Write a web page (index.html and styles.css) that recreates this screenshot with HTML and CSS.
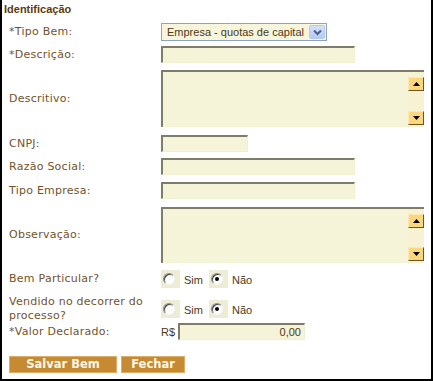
FILE: index.html
```html
<!DOCTYPE html>
<html>
<head lang="pt">
    <meta charset="UTF-8">
    <title>Identificação</title>
    <link rel="stylesheet" href="styles.css">
</head>
<body>
<div class="painel">
    <div class="titulo">Identificação</div>
    <div class="form">
        <div class="linha l-tipo">
            <label>*Tipo Bem:</label>
            <div class="select">
                <span class="select-texto">Empresa - quotas de capital</span>
                <span class="select-seta">
                    <svg width="9" height="7" viewBox="0 0 9 7"><path d="M1 1.5 L4.5 5 L8 1.5" fill="none" stroke="#4d6185" stroke-width="2"/></svg>
                </span>
            </div>
        </div>
        <div class="linha l-desc">
            <label>*Descrição:</label>
            <div class="input input-medio"></div>
        </div>
        <div class="linha l-area">
            <label>Descritivo:</label>
            <div class="area">
                <div class="area-texto"></div>
                <div class="rolagem">
                    <span class="rolagem-btn"><svg width="7" height="4" viewBox="0 0 7 4"><path d="M0 4 L3.5 0 L7 4 Z" fill="#000"/></svg></span>
                    <span class="rolagem-btn"><svg width="7" height="4" viewBox="0 0 7 4"><path d="M0 0 L3.5 4 L7 0 Z" fill="#000"/></svg></span>
                </div>
            </div>
        </div>
        <div class="linha l-cnpj">
            <label>CNPJ:</label>
            <div class="input input-curto"></div>
        </div>
        <div class="linha l-razao">
            <label>Razão Social:</label>
            <div class="input input-medio"></div>
        </div>
        <div class="linha l-razao">
            <label>Tipo Empresa:</label>
            <div class="input input-medio"></div>
        </div>
        <div class="linha l-obs">
            <label>Observação:</label>
            <div class="area area-obs">
                <div class="area-texto"></div>
                <div class="rolagem">
                    <span class="rolagem-btn"><svg width="7" height="4" viewBox="0 0 7 4"><path d="M0 4 L3.5 0 L7 4 Z" fill="#000"/></svg></span>
                    <span class="rolagem-btn"><svg width="7" height="4" viewBox="0 0 7 4"><path d="M0 0 L3.5 4 L7 0 Z" fill="#000"/></svg></span>
                </div>
            </div>
        </div>
        <div class="linha l-bem">
            <label>Bem Particular?</label>
            <div class="opcoes">
                <span class="radio-caixa"><span class="radio"></span></span>
                <span class="opcao">Sim</span>
                <span class="radio-caixa"><span class="radio marcado"></span></span>
                <span class="opcao">Não</span>
            </div>
        </div>
        <div class="linha l-vendido">
            <label>Vendido no decorrer do processo?</label>
            <div class="opcoes">
                <span class="radio-caixa"><span class="radio"></span></span>
                <span class="opcao">Sim</span>
                <span class="radio-caixa"><span class="radio marcado"></span></span>
                <span class="opcao">Não</span>
            </div>
        </div>
        <div class="linha l-valor">
            <label>*Valor Declarado:</label>
            <span class="moeda">R$</span>
            <div class="input input-valor">0,00</div>
        </div>
        <div class="botoes">
            <a href="javascript:void(0);" class="botao botao-salvar">Salvar Bem</a>
            <a href="javascript:void(0);" class="botao botao-fechar">Fechar</a>
        </div>
    </div>
</div>
</body>
</html>
```

FILE: styles.css
```css
body {
    margin: 0px;
    background: #ffffff;
}
.painel {
    width: 433px;
    height: 381px;
    box-sizing: border-box;
    border-left: #000000 solid 2px;
    border-right: #000000 solid 2px;
    border-bottom: #000000 solid 2px;
}
.titulo {
    height: 23px;
    box-sizing: border-box;
    padding: 3px 0px 0px 2px;
    font-family: "Liberation Sans", Arial, sans-serif;
    font-weight: bold;
    font-size: 11px;
    line-height: 13px;
    color: #5e3b0b;
}
.form {
    padding-left: 7px;
}
.linha {
    display: flex;
    align-items: center;
}
.linha label {
    width: 152px;
    flex: none;
    font-family: "DejaVu Sans", Verdana, sans-serif;
    font-size: 11px;
    line-height: 14px;
    letter-spacing: 0.25px;
    color: #73532b;
}
.l-desc { margin-top: 5px; }
.l-area { margin-top: 7px; }
.l-cnpj { margin-top: 8px; }
.l-razao { margin-top: 6px; }
.l-razao + .l-razao { margin-top: 7px; }
.l-obs { margin-top: 8px; }
.l-bem { margin-top: 7px; }
.l-vendido { margin-top: 7px; }
.l-valor { margin-top: 0px; }

/* caixa de selecao */
.select {
    width: 166px;
    height: 18px;
    box-sizing: border-box;
    border: #8ea3bf solid 1px;
    background: #f7f5dc;
    display: flex;
    align-items: center;
    justify-content: space-between;
    padding: 0px 1px 0px 5px;
}
.select-texto {
    font-family: "Liberation Sans", Arial, sans-serif;
    font-size: 11px;
    color: #4e3814;
}
.select-seta {
    width: 16px;
    height: 14px;
    box-sizing: border-box;
    border: #b7c9ee solid 1px;
    border-radius: 2px;
    background: linear-gradient(#d4e1fc, #b6caf4);
    display: flex;
    align-items: center;
    justify-content: center;
}

/* campos de texto */
.input {
    height: 17px;
    box-sizing: border-box;
    background: #f5f4d8;
    border-top: #7e7c6b solid 2px;
    border-left: #7e7c6b solid 2px;
    border-right: #f0efd2 solid 1px;
    border-bottom: #f0efd2 solid 1px;
}
.input-medio { width: 194px; }
.input-curto { width: 87px; }
.input-valor {
    width: 127px;
    margin-left: 2px;
    padding-right: 3px;
    text-align: right;
    font-family: "Liberation Sans", Arial, sans-serif;
    font-size: 11px;
    line-height: 14px;
    color: #4e3814;
}
.moeda {
    width: 15px;
    font-family: "Liberation Sans", Arial, sans-serif;
    font-size: 11px;
    color: #4e3814;
}

/* area de texto com barra de rolagem */
.area {
    width: 263px;
    height: 57px;
    box-sizing: border-box;
    display: flex;
    background: #f5f4d8;
    border-top: #7e7c6b solid 2px;
    border-left: #7e7c6b solid 2px;
}
.area-obs { height: 56px; }
.area-texto {
    flex: 1;
}
.rolagem {
    width: 16px;
    display: flex;
    flex-direction: column;
    justify-content: space-between;
    padding: 5px 0px 2px 0px;
    background: #f6f2d3;
}
.rolagem-btn {
    height: 14px;
    box-sizing: border-box;
    background: #fad77c;
    border-top: #fde9b0 solid 1px;
    border-left: #fde9b0 solid 1px;
    border-right: #6d5520 solid 1px;
    border-bottom: #6d5520 solid 1px;
    display: flex;
    align-items: center;
    justify-content: center;
}

/* opcoes sim/nao */
.opcoes {
    display: flex;
    align-items: center;
}
.radio-caixa {
    width: 19px;
    height: 18px;
    background: #edecd5;
    display: flex;
    align-items: center;
    padding-left: 2px;
    box-sizing: border-box;
}
.radio {
    width: 12px;
    height: 12px;
    box-sizing: border-box;
    border-radius: 50%;
    border: solid 1px;
    border-color: #8a8a8a #f4f4f4 #f4f4f4 #8a8a8a;
    box-shadow: inset 1px 1px 0px #454545;
    background: #ffffff;
    position: relative;
}
.radio.marcado::after {
    content: "";
    position: absolute;
    left: 3px;
    top: 3px;
    width: 4px;
    height: 4px;
    border-radius: 50%;
    background: #000000;
}
.opcao {
    margin: 2px 6px 0px 4px;
    font-family: "Liberation Sans", Arial, sans-serif;
    font-size: 11px;
    color: #4e3814;
}

/* botoes */
.botoes {
    margin-top: 16px;
    display: flex;
    gap: 4px;
}
.botao {
    display: block;
    height: 17px;
    box-sizing: border-box;
    background: #c68a32;
    border: #dcae6a solid 1px;
    text-align: center;
    font-family: "DejaVu Sans", Verdana, sans-serif;
    font-weight: bold;
    font-size: 11.5px;
    line-height: 15px;
    color: #fff7e2;
    text-decoration: none;
}
.botao-salvar { width: 108px; }
.botao-fechar { width: 64px; }
```
